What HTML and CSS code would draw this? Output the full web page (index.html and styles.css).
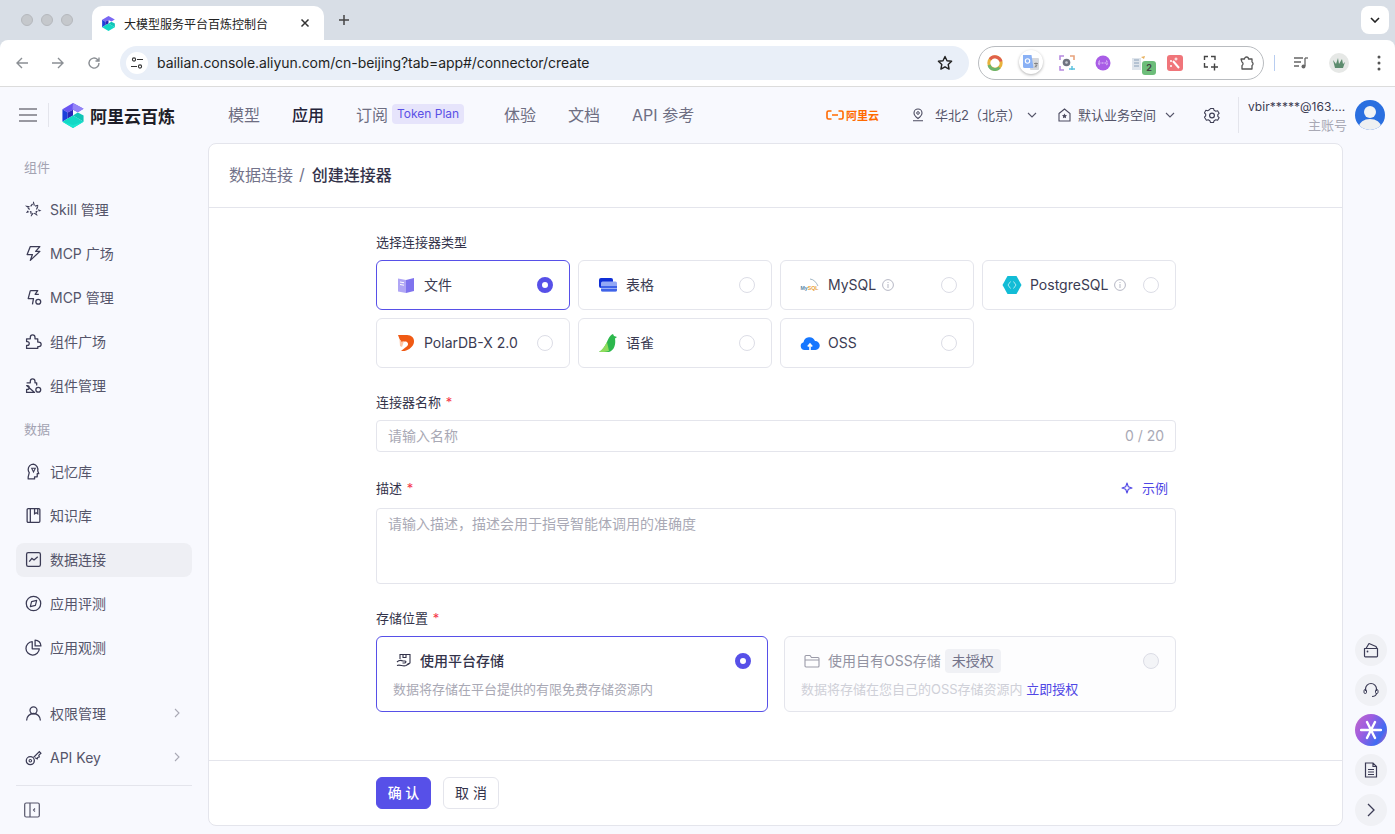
FILE: index.html
```html
<!DOCTYPE html>
<html lang="zh-CN">
<head>
    <meta charset="UTF-8">
    <meta name="viewport" content="width=device-width, initial-scale=1.0">
    <title>大模型服务平台百炼控制台</title>
    <link rel="stylesheet" href="styles.css">
</head>
<body>
<div class="window">

    <!-- browser tabs -->
    <div class="tabstrip">
        <div class="lights"><span></span><span></span><span></span></div>
        <div class="tab">
            <svg class="fav" width="13" height="15" viewBox="0 0 22 26"><path d="M11 0 22 6l-6 3.500L11 7 5.500 10 0 6.500z" fill="#7a68f4"/><path d="M0 6.500 5.500 10v6L0 19.500z" fill="#1c3fdb"/><path d="M5.500 10 11 7v6l-5.500 3z" fill="#2a25b8"/><path d="M5.500 16 11 13l11 6.500L11 26 0 19.500z" fill="#12d8c6"/><path d="M11 13l5-3 6 3v6.500z" fill="#0fc4b6"/></svg>
            <span class="tab-title">大模型服务平台百炼控制台</span>
            <svg class="tab-x" width="10" height="10" viewBox="0 0 10 10"><path d="M1.500 1.500l7 7M8.500 1.500l-7 7" stroke="#333" stroke-width="1.500"/></svg>
        </div>
        <svg class="tab-new" width="12" height="12" viewBox="0 0 12 12"><path d="M6 1v10M1 6h10" stroke="#444" stroke-width="1.500"/></svg>
        <div class="tab-menu"><svg width="10" height="6" viewBox="0 0 10 6"><path d="M1 1l4 4 4-4" fill="none" stroke="#222" stroke-width="1.600"/></svg></div>
    </div>

    <!-- browser toolbar -->
    <div class="toolbar">
        <div class="nav-btns">
            <svg width="16" height="16" viewBox="0 0 16 16"><path d="M14 8H3M8 3 3 8l5 5" fill="none" stroke="#8b8f94" stroke-width="1.400"/></svg>
            <svg width="16" height="16" viewBox="0 0 16 16"><path d="M2 8h11M8 3l5 5-5 5" fill="none" stroke="#8b8f94" stroke-width="1.400"/></svg>
            <svg width="16" height="16" viewBox="0 0 16 16"><path d="M13 8a5 5 0 1 1-1.500-3.500L13 6M13 2.500V6H9.500" fill="none" stroke="#8b8f94" stroke-width="1.400"/></svg>
        </div>
        <div class="urlbar">
            <div class="site-btn"><svg width="14" height="14" viewBox="0 0 14 14"><circle cx="4" cy="3.500" r="1.600" fill="none" stroke="#333" stroke-width="1.100"/><path d="M7 3.500h6M1 10.500h6" stroke="#333" stroke-width="1.100"/><circle cx="10" cy="10.500" r="1.600" fill="none" stroke="#333" stroke-width="1.100"/></svg></div>
            <span class="url">bailian.console.aliyun.com/cn-beijing?tab=app#/connector/create</span>
            <svg class="star" width="16" height="16" viewBox="0 0 16 16"><path d="M8 1.500l2 4.300 4.600.5-3.400 3.200.9 4.600L8 11.800l-4.100 2.300.9-4.600L1.400 6.300 6 5.800z" fill="none" stroke="#222" stroke-width="1.400" stroke-linejoin="round"/></svg>
        </div>
        <div class="ext-pill">
            <span class="ext"><svg width="16" height="16" viewBox="0 0 16 16"><circle cx="8" cy="8" r="6.200" fill="none" stroke="#e8b23c" stroke-width="3"/><path d="M3 4.300A6.200 6.200 0 0 1 14 6.500" fill="none" stroke="#e0604c" stroke-width="3"/><path d="M2 10a6.200 6.200 0 0 0 10.500 2.500" fill="none" stroke="#6cb56c" stroke-width="3"/></svg></span>
            <span class="ext ext-round"><svg width="18" height="18" viewBox="0 0 18 18"><rect x="8" y="4" width="9" height="12" rx="1" fill="#d6d8dc"/><path d="M1 1h8.500l2 13H2.500a1.500 1.500 0 0 1-1.500-1.500z" fill="#8ab1f5"/><circle cx="5.500" cy="7" r="2.200" fill="none" stroke="#fff" stroke-width="1.100"/><path d="M12 9.500h4M14 8.500v5M12.500 13l3-2" stroke="#777" stroke-width=".8"/></svg></span>
            <span class="ext"><svg width="16" height="16" viewBox="0 0 16 16"><path d="M1 5V1h4" fill="none" stroke="#b78ae0" stroke-width="1.600"/><path d="M11 1h4v4" fill="none" stroke="#e8a37c" stroke-width="1.600"/><path d="M1 11v4h4" fill="none" stroke="#b78ae0" stroke-width="1.600"/><circle cx="7.500" cy="7.500" r="3.800" fill="#6f7480"/><circle cx="7.500" cy="7.500" r="1.300" fill="#c9ccd2"/><path d="M10 14h6M13 11v4" stroke="#5cc2de" stroke-width="1.500"/></svg></span>
            <span class="ext"><svg width="16" height="16" viewBox="0 0 16 16"><circle cx="8" cy="8" r="7.500" fill="#a95de6"/><path d="M4.500 5.500 3.500 8l1 2.500M11.500 5.500l1 2.500-1 2.500M3.500 8h9" stroke="#ecdcfb" stroke-width=".9" fill="none" stroke-dasharray="2 1"/></svg></span>
            <span class="ext ext-badge"><svg width="16" height="16" viewBox="0 0 16 16"><path d="M1 3h9v12H1z" fill="#dfe5ec"/><path d="M3 5h5M3 8h5M3 11h5" stroke="#8aa0b8"/><path d="M10 2l4-1-1 3z" fill="#e7b15f"/></svg><b>2</b></span>
            <span class="ext"><svg width="16" height="16" viewBox="0 0 16 16"><rect width="16" height="16" rx="3" fill="#f0757a"/><path d="M6 6l6 7" stroke="#fff" stroke-width="2"/><path d="M9 2.500v3M7.500 4h3M4 5v2M3 6h2M4 10v2M3 11h2" stroke="#fff"/></svg></span>
            <span class="ext"><svg width="16" height="16" viewBox="0 0 16 16"><path d="M1.500 5V1.500H5M8 1.500h4V5M1.500 8v4H5" fill="none" stroke="#444" stroke-width="1.400"/><path d="M8 12h7M11.500 8.500v7" stroke="#444" stroke-width="1.400"/></svg></span>
            <span class="ext"><svg width="16" height="16" viewBox="0 0 16 16"><path d="M2 4h3.500a2 2 0 0 1 4 0H13v3a2 2 0 0 1 0 3.500V14H3v-3.500a2 2 0 0 0 0-3.500z" fill="none" stroke="#555" stroke-width="1.300" stroke-linejoin="round"/></svg></span>
        </div>
        <span class="tool-sep"></span>
        <div class="tool-end">
            <svg width="16" height="16" viewBox="0 0 16 16"><path d="M1 3h9M1 7h7M1 11h5" stroke="#666" stroke-width="1.300"/><path d="M12 3v8" stroke="#666" stroke-width="1.300"/><path d="M12 3h3" stroke="#666" stroke-width="1.300"/><circle cx="10.500" cy="11.500" r="2" fill="#666"/></svg>
            <span class="profile"><svg width="14" height="14" viewBox="0 0 14 14"><path d="M1 4l3 4 2-6 1 6 3-5 1 5 2-2-2 6H3z" fill="#5d8c6e"/></svg></span>
            <svg width="4" height="16" viewBox="0 0 4 16"><circle cx="2" cy="2" r="1.500" fill="#555"/><circle cx="2" cy="8" r="1.500" fill="#555"/><circle cx="2" cy="14" r="1.500" fill="#555"/></svg>
        </div>
    </div>

    <!-- console header -->
    <header class="topnav">
        <svg class="burger" width="18" height="14" viewBox="0 0 18 14"><path d="M0 1h18M0 7h18M0 13h18" stroke="#7a7a82" stroke-width="1.400"/></svg>
        <span class="top-sep"></span>
        <svg class="logo" width="22" height="25" viewBox="0 0 22 26"><path d="M11 0 22 6l-6 3.500L11 7 5.500 10 0 6.500z" fill="#6a55f2"/><path d="M11 0 22 6l-6 3.500-5.500-3z" fill="#9484f7"/><path d="M0 6.500 5.500 10v6L0 19.500z" fill="#1c3fdb"/><path d="M5.500 10 11 7v6l-5.500 3z" fill="#2a25b8"/><path d="M5.500 16 11 13l11 6.500L11 26 0 19.500z" fill="#12d8c6"/><path d="M11 13l5-3 6 3v6.500z" fill="#0fc4b6"/><path d="M0 19.500 11 26l11-6.500-11 3.500z" fill="#1be6d0"/></svg>
        <span class="brand">阿里云百炼</span>
        <nav class="mainnav">
            <a>模型</a>
            <a class="on">应用</a>
            <a class="with-badge">订阅<span class="plan">Token Plan</span></a>
            <a>体验</a>
            <a>文档</a>
            <a>API 参考</a>
        </nav>
        <div class="top-right">
            <span class="aliyun"><svg width="18" height="10" viewBox="0 0 18 10"><path d="M5.500 1H2.500Q1 1 1 2.500v5Q1 9 2.500 9h3M12.500 1h3Q17 1 17 2.500v5Q17 9 15.500 9h-3M6 5h6" fill="none" stroke="#ff6a00" stroke-width="1.600"/></svg>阿里云</span>
            <svg class="pin" width="14" height="14" viewBox="0 0 14 14"><path d="M7 1a4 4 0 0 1 4 4c0 2.500-4 5.500-4 5.500S3 7.500 3 5a4 4 0 0 1 4-4zM2 12.800h10" fill="none" stroke="#4b4b60" stroke-width="1.100"/><circle cx="7" cy="5" r="1.300" fill="none" stroke="#4b4b60"/></svg>
            <span class="region">华北2（北京）</span>
            <svg class="chev" width="10" height="6" viewBox="0 0 10 6"><path d="M1 1l4 4 4-4" fill="none" stroke="#55556a" stroke-width="1.100"/></svg>
            <svg class="home" width="13" height="14" viewBox="0 0 13 14"><path d="M1 5.500 6.500 1 12 5.500V13H1z" fill="none" stroke="#4b4b60" stroke-width="1.100"/><path d="M6.500 5.500l.8 1.600 1.700.2-1.200 1.200.3 1.700-1.600-.8-1.600.8.300-1.700L4 7.300l1.700-.2z" fill="#4b4b60"/></svg>
            <span class="space">默认业务空间</span>
            <svg class="chev chev-end" width="10" height="6" viewBox="0 0 10 6"><path d="M1 1l4 4 4-4" fill="none" stroke="#55556a" stroke-width="1.100"/></svg>
            <svg class="gear" width="16" height="17" viewBox="0 0 16 17"><path d="M6.500 1.500h3l.6 1.800 1.700.9 1.800-.5 1.500 2.600-1.300 1.400v1.600l1.300 1.400-1.500 2.600-1.800-.5-1.700.9-.6 1.800h-3l-.6-1.800-1.700-.9-1.800.5L.4 10.200l1.300-1.400V7.200L.4 5.800l1.500-2.600 1.800.5 1.700-.9z" fill="none" stroke="#3f3f55" stroke-width="1.100" stroke-linejoin="round"/><circle cx="8" cy="8.500" r="2.400" fill="none" stroke="#3f3f55" stroke-width="1.200"/></svg>
            <span class="user-sep"></span>
            <div class="user"><span class="mail">vbir*****@163....</span><span class="role">主账号</span></div>
            <svg class="avatar" width="30" height="30" viewBox="0 0 30 30"><defs><clipPath id="av"><circle cx="15" cy="15" r="15"/></clipPath></defs><circle cx="15" cy="15" r="15" fill="#2a6fe0"/><g clip-path="url(#av)"><circle cx="15" cy="12" r="6" fill="#f1f3f5"/><ellipse cx="15" cy="27" rx="11" ry="8" fill="#eef0f2"/></g></svg>
        </div>
    </header>

    <div class="layout">
        <!-- left menu -->
        <aside class="sidebar">
            <div class="side-label">组件</div>
            <a class="side-item"><svg class="ico" viewBox="0 0 16 16"><path d="M8 1.500l1 3.500 3.500-1-1.500 3.500 3 1.500-3.500 1 .5 3-3-2-2 2.500-.5-3.500-3.500.5 2-3L1.500 5l3.500.5z" fill="none" stroke="#3b3b55" stroke-width="1.100" stroke-dasharray="3 1.200"/></svg>Skill 管理</a>
            <a class="side-item"><svg class="ico" viewBox="0 0 16 16"><path d="M5 1.500h9L10 6h4l-9 8.500L7 9H2z" fill="none" stroke="#3b3b55" stroke-width="1.200" stroke-linejoin="round"/></svg>MCP 广场</a>
            <a class="side-item"><svg class="ico" viewBox="0 0 16 16"><path d="M5 1.500h7L9.500 5H13M7 14.500 8 9H3l2-7.500" fill="none" stroke="#3b3b55" stroke-width="1.200" stroke-linejoin="round"/><circle cx="12.500" cy="12" r="2.300" fill="none" stroke="#3b3b55" stroke-width="1.200"/></svg>MCP 管理</a>
            <a class="side-item"><svg class="ico" viewBox="0 0 16 16"><path d="M1.500 5.500H5V4a2.200 2.200 0 0 1 4.400 0v1.500H12v3h1a2.200 2.200 0 0 1 0 4.400h-1v1.600H1.500v-2.800h.7a1.800 1.800 0 0 0 0-3.600h-.7z" fill="none" stroke="#3b3b55" stroke-width="1.200" stroke-linejoin="round"/></svg>组件广场</a>
            <a class="side-item"><svg class="ico" viewBox="0 0 16 16"><path d="M1.500 5.500H5V4a2.200 2.200 0 0 1 4.400 0v1.500H11v2.500M9 14.500H1.500v-2.800h.7a1.800 1.800 0 0 0 0-3.600h-.7z" fill="none" stroke="#3b3b55" stroke-width="1.200" stroke-linejoin="round"/><circle cx="12.500" cy="12" r="2.300" fill="none" stroke="#3b3b55" stroke-width="1.200"/></svg>组件管理</a>
            <div class="side-label second">数据</div>
            <a class="side-item"><svg class="ico" viewBox="0 0 16 16"><path d="M3 13v2h6v-2h2.500v-3H13l-1-2.500A5.500 5.500 0 0 0 8 1a5 5 0 0 0-5 5c0 1 .3 2 1 3z" fill="none" stroke="#3b3b55" stroke-width="1.200" stroke-linejoin="round"/><path d="M6.300 5h3.400L8 8.500z" fill="none" stroke="#3b3b55"/></svg>记忆库</a>
            <a class="side-item"><svg class="ico" viewBox="0 0 16 16"><rect x="2" y="1.500" width="12" height="13" rx="1" fill="none" stroke="#3b3b55" stroke-width="1.200"/><path d="M5 1.500V14.500M9 1.500v5l1.500-1 1.500 1v-5" fill="none" stroke="#3b3b55" stroke-width="1.200"/></svg>知识库</a>
            <a class="side-item active"><svg class="ico" viewBox="0 0 16 16"><rect x="1.500" y="1.500" width="13" height="13" rx="1.500" fill="none" stroke="#3b3b55" stroke-width="1.200"/><path d="M4 10l2.500-3 2 1.500L12 5.500" fill="none" stroke="#3b3b55" stroke-width="1.200"/></svg>数据连接</a>
            <a class="side-item"><svg class="ico" viewBox="0 0 16 16"><circle cx="8" cy="8" r="6.800" fill="none" stroke="#3b3b55" stroke-width="1.200"/><path d="M11 5 9.800 9.800 5 11l1.200-4.800z" fill="none" stroke="#3b3b55" stroke-width="1.100" stroke-linejoin="round"/></svg>应用评测</a>
            <a class="side-item"><svg class="ico" viewBox="0 0 16 16"><path d="M6.800 2.500A6.300 6.300 0 1 0 13.500 9.200H6.800z" fill="none" stroke="#3b3b55" stroke-width="1.200" stroke-linejoin="round"/><path d="M9.500 1A5.500 5.500 0 0 1 15 6.500H9.500z" fill="none" stroke="#3b3b55" stroke-width="1.200" stroke-linejoin="round"/></svg>应用观测</a>
            <a class="side-item lower"><svg class="ico" viewBox="0 0 16 16"><circle cx="8" cy="5" r="3.300" fill="none" stroke="#3b3b55" stroke-width="1.200"/><path d="M1.500 14.500a6.500 6.500 0 0 1 13 0" fill="none" stroke="#3b3b55" stroke-width="1.200"/></svg>权限管理<svg class="side-arrow" width="6" height="10" viewBox="0 0 6 10"><path d="M1 1l4 4-4 4" fill="none" stroke="#a9a9b5" stroke-width="1.100"/></svg></a>
            <a class="side-item"><svg class="ico" viewBox="0 0 16 16"><circle cx="5" cy="11" r="3.800" fill="none" stroke="#3b3b55" stroke-width="1.200"/><circle cx="5" cy="11" r="1.200" fill="none" stroke="#3b3b55"/><path d="M8 8l5.500-5.500L15 4l-2 2 .5 1.500-1.500.5-.5 1.300-2-1" fill="none" stroke="#3b3b55" stroke-width="1.100"/></svg>API Key<svg class="side-arrow" width="6" height="10" viewBox="0 0 6 10"><path d="M1 1l4 4-4 4" fill="none" stroke="#a9a9b5" stroke-width="1.100"/></svg></a>
            <div class="side-foot">
                <svg width="16" height="16" viewBox="0 0 16 16"><rect x=".7" y="1" width="14.600" height="14" rx="1.500" fill="none" stroke="#55556a" stroke-width="1.200"/><path d="M6 1v14" stroke="#55556a" stroke-width="1.200"/><path d="M11 6.500 9.500 8l1.500 1.500" fill="none" stroke="#55556a" stroke-width="1.100"/></svg>
            </div>
        </aside>

        <!-- page card -->
        <main class="card">
            <div class="crumbs"><span class="crumb-back">数据连接</span><span class="crumb-slash">/</span><span class="crumb-now">创建连接器</span></div>
            <div class="form-scroll">
                <form class="form">
                    <div class="label">选择连接器类型</div>
                    <div class="types">
                        <div class="type selected">
                            <svg class="type-ico" viewBox="0 0 20 20"><path d="M2 3.500 10 5v13l-8-1.500z" fill="#b0a6f5"/><path d="M18 3 10 5v13l8-2z" fill="#7f73ee"/><path d="M4 7l4 .7M4 9.500l4 .7" stroke="#fff" stroke-width="1"/></svg>
                            <span class="type-name zh">文件</span><span class="radio on"></span>
                        </div>
                        <div class="type">
                            <svg class="type-ico" viewBox="0 0 20 20"><rect x="1" y="3" width="14" height="10" rx="2" fill="#0f2fd6"/><rect x="3" y="6.500" width="16" height="10" rx="1.500" fill="#93a8f5"/><path d="M3 11h16v4a1.500 1.500 0 0 1-1.500 1.500h-13A1.500 1.500 0 0 1 3 15z" fill="#3f63e8"/><path d="M3 13.500h16" stroke="#c3cffa" stroke-width=".7"/></svg>
                            <span class="type-name zh">表格</span><span class="radio"></span>
                        </div>
                        <div class="type">
                            <svg class="type-ico" viewBox="0 0 20 20"><path d="M10 4c4 .5 6 3 8 7" fill="none" stroke="#8aa4b8" stroke-width=".8"/><text x=".5" y="15" font-size="6" textLength="18" lengthAdjust="spacingAndGlyphs" font-family="Liberation Sans" font-weight="700" fill="#5b87a8">My<tspan fill="#e8a03c">SQL</tspan></text></svg>
                            <span class="type-name">MySQL</span><svg class="info" width="12" height="12" viewBox="0 0 12 12"><circle cx="6" cy="6" r="5.400" fill="none" stroke="#b5b7c4"/><path d="M6 5v4M6 3v1" stroke="#b5b7c4"/></svg><span class="radio"></span>
                        </div>
                        <div class="type">
                            <svg class="type-ico" viewBox="0 0 20 20"><path d="M5.500 1h9L19.500 10l-5 9h-9L.5 10z" fill="#12bcd6"/><path d="M8.500 6.500 6 10l2.500 3.500M11.500 6.500 14 10l-2.500 3.500" fill="none" stroke="#d2f4f8" stroke-width=".8"/></svg>
                            <span class="type-name">PostgreSQL</span><svg class="info" width="12" height="12" viewBox="0 0 12 12"><circle cx="6" cy="6" r="5.400" fill="none" stroke="#b5b7c4"/><path d="M6 5v4M6 3v1" stroke="#b5b7c4"/></svg><span class="radio"></span>
                        </div>
                        <div class="type">
                            <svg class="type-ico" viewBox="0 0 20 20"><path d="M2 2h9c4.500 0 7.500 3 7 7-.5 4.500-5 8-9.500 9H5l5-4c2.500-1 3-4.500 0-5.500-1-.3-3 0-4.500.5L3.500 6z" fill="#f05a14"/><path d="M3.500 6 5.500 9 8 8 6 14l-2-1z" fill="#ffc4a3"/></svg>
                            <span class="type-name">PolarDB-X 2.0</span><span class="radio"></span>
                        </div>
                        <div class="type">
                            <svg class="type-ico" viewBox="0 0 20 20"><path d="M1 19C5 17 7 13 9 9c1-3 3-7 6-8l1 2 3 1-2 1.500c1 6-1 12-6 13.500z" fill="#2db84d"/><path d="M1 19c3-2 5-5 8-10l2 9c-3 1-7 1-10 1z" fill="#8fdc5e"/></svg>
                            <span class="type-name zh">语雀</span><span class="radio"></span>
                        </div>
                        <div class="type">
                            <svg class="type-ico" viewBox="0 0 20 20"><path d="M4.500 17a4 4 0 0 1-1-7.800A6 6 0 0 1 15 8a4.500 4.500 0 0 1 .5 9z" fill="#1677ff"/><path d="M10 17v-5M7.800 13.500 10 11l2.200 2.500" fill="none" stroke="#fff" stroke-width="1.600"/></svg>
                            <span class="type-name">OSS</span><span class="radio"></span>
                        </div>
                    </div>

                    <div class="label">连接器名称 <i>*</i></div>
                    <div class="input"><span class="ph">请输入名称</span><span class="count">0 / 20</span></div>

                    <div class="label label-row"><span>描述 <i>*</i></span><a class="sample"><svg width="12" height="12" viewBox="0 0 12 12"><path d="M6 1l1.300 3.700L11 6 7.300 7.300 6 11 4.700 7.300 1 6l3.700-1.300z" fill="none" stroke="#4f46e5" stroke-width="1.100" stroke-linejoin="round"/></svg>示例</a></div>
                    <div class="textarea"><span class="ph">请输入描述，描述会用于指导智能体调用的准确度</span></div>

                    <div class="label">存储位置 <i>*</i></div>
                    <div class="stores">
                        <div class="store selected">
                            <div class="store-head">
                                <svg class="store-ico" viewBox="0 0 16 16"><path d="M4 6V1.500h10V10l-3 1.500M7 1.500v3h3v-3" fill="none" stroke="#33334a" stroke-width="1.100"/><path d="M1 9c2-2 4-2 6-1h2c1.500.3 1 2-.5 2H6.500M1 12.500c3-1.500 6 1.500 9 0l3.500-2" fill="none" stroke="#33334a" stroke-width="1.100"/></svg>
                                <span class="store-name">使用平台存储</span><span class="radio on"></span>
                            </div>
                            <p class="store-desc">数据将存储在平台提供的有限免费存储资源内</p>
                        </div>
                        <div class="store disabled">
                            <div class="store-head">
                                <svg class="store-ico" viewBox="0 0 16 16"><path d="M1 3.500a1 1 0 0 1 1-1h4l1.500 2H14a1 1 0 0 1 1 1V13a1 1 0 0 1-1 1H2a1 1 0 0 1-1-1zM1 7h14" fill="none" stroke="#9b9ba8" stroke-width="1.100"/></svg>
                                <span class="store-name">使用自有OSS存储</span><span class="tag">未授权</span><span class="radio"></span>
                            </div>
                            <p class="store-desc">数据将存储在您自己的OSS存储资源内 <a>立即授权</a></p>
                        </div>
                    </div>
                </form>
            </div>
            <div class="actions">
                <button class="btn primary" type="button">确 认</button>
                <button class="btn" type="button">取 消</button>
            </div>
        </main>

        <!-- right rail -->
        <aside class="rail">
            <span class="rail-btn"><svg width="16" height="16" viewBox="0 0 16 16"><path d="M1.500 6.500h13V14a.8.800 0 0 1-.8.800H2.300a.8.800 0 0 1-.8-.8zM3 6.500 6 1.500l7 3 1 2" fill="none" stroke="#3b3b55" stroke-width="1.200" stroke-linejoin="round"/><circle cx="4.500" cy="9.500" r=".9" fill="#3b3b55"/></svg></span>
            <span class="rail-btn"><svg width="16" height="16" viewBox="0 0 16 16"><path d="M2.500 9V7a5.500 5.500 0 0 1 11 0v2M13.500 11c0 2-2 3.500-4.500 3.500" fill="none" stroke="#3b3b55" stroke-width="1.200"/><rect x="1" y="7.500" width="2.500" height="4" rx="1.200" fill="none" stroke="#3b3b55"/><rect x="12.500" y="7.500" width="2.500" height="4" rx="1.200" fill="none" stroke="#3b3b55"/></svg></span>
            <span class="rail-btn ai"><svg width="22" height="22" viewBox="0 0 22 22"><path d="M1 11h20M7 3l8 16M15 3 7 19" stroke="#fff" stroke-width="2.400" stroke-linecap="round"/></svg></span>
            <span class="rail-btn"><svg width="16" height="16" viewBox="0 0 16 16"><path d="M2.500 1h7.500l3.500 3.500V15h-11zM10 1v3.500h3.500M5 7.500h6M5 10h6M5 12.500h6" fill="none" stroke="#3b3b55" stroke-width="1.200"/></svg></span>
            <span class="rail-btn"><svg width="8" height="14" viewBox="0 0 8 14"><path d="M1 1l6 6-6 6" fill="none" stroke="#3b3b55" stroke-width="1.300"/></svg></span>
        </aside>
    </div>
</div>
</body>
</html>
```

FILE: styles.css
```css
*{
    box-sizing: border-box;
}
html,body{
    margin: 0;
    height: 100%;
    overflow: hidden;
}
body{
    font-family: Inter, "Noto Sans CJK SC", sans-serif;
    font-size: 14px;
    color: #3b3b52;
    background-color: #d8dee6;
}
svg{
    display: block;
    flex: none;
}
a{
    color: inherit;
    cursor: pointer;
}
.window{
    width: 1395px;
    height: 834px;
    display: flex;
    flex-direction: column;
}

/* browser tabs */
.tabstrip{
    height: 40px;
    display: flex;
    align-items: flex-end;
    padding-left: 21px;
    background-color: #d8dee6;
}
.lights{
    display: flex;
    gap: 8px;
    align-self: center;
    width: 71px;
}
.lights span{
    width: 12px;
    height: 12px;
    border-radius: 50%;
    background-color: #c5c8cc;
    border: 1px solid #b5b8bd;
}
.tab{
    width: 232px;
    height: 34px;
    display: flex;
    align-items: center;
    padding-left: 10px;
    background-color: #fff;
    border-radius: 10px 10px 0 0;
}
.tab-title{
    margin-left: 9px;
    font-size: 12px;
    color: #222;
    white-space: nowrap;
    width: 176px;
}
.tab-new{
    align-self: center;
    margin-left: 14px;
}
.tab-menu{
    width: 28px;
    height: 28px;
    margin-left: auto;
    margin-right: 6px;
    margin-bottom: 6px;
    border-radius: 8px;
    background-color: #fff;
    display: flex;
    align-items: center;
    justify-content: center;
}

/* browser toolbar */
.toolbar{
    height: 47px;
    display: flex;
    align-items: center;
    background-color: #fff;
    border-bottom: 1px solid #dcdcdc;
    border-radius: 8px 8px 0 0;
    padding-bottom: 1px;
}
.nav-btns{
    display: flex;
    gap: 20px;
    margin-left: 14px;
}
.urlbar{
    width: 849px;
    height: 34px;
    margin-left: 18px;
    display: flex;
    align-items: center;
    border-radius: 17px;
    background-color: #e9eff8;
    padding-left: 6px;
}
.site-btn{
    width: 22px;
    height: 22px;
    border-radius: 50%;
    background-color: #fff;
    display: flex;
    align-items: center;
    justify-content: center;
}
.url{
    margin-left: 9px;
    font-size: 14px;
    letter-spacing: -0.06px;
    color: #1f1f1f;
    white-space: nowrap;
}
.star{
    margin-left: auto;
    margin-right: 16px;
}
.ext-pill{
    width: 286px;
    height: 34px;
    margin-left: 9px;
    border: 1px solid #b9bcc0;
    border-radius: 17px;
    display: flex;
    align-items: center;
    padding-left: 8px;
}
.ext{
    width: 16px;
    margin-right: 20px;
    display: flex;
    align-items: center;
    justify-content: center;
    position: relative;
}
.ext-round::before{
    content: "";
    position: absolute;
    left: -4px;
    top: -4px;
    width: 24px;
    height: 24px;
    border-radius: 50%;
    background-color: #fff;
    box-shadow: 0 1px 3px rgba(0,0,0,.3);
}
.ext-round svg{
    position: relative;
}
.ext-badge b{
    position: absolute;
    right: -9px;
    top: 6px;
    width: 14px;
    height: 14px;
    border-radius: 3px;
    background-color: #6dbd7a;
    color: #444;
    font-size: 9px;
    line-height: 14px;
    text-align: center;
}
.tool-sep{
    width: 1px;
    height: 16px;
    margin-left: 10px;
    background-color: #b8cdf0;
}
.tool-end{
    display: flex;
    align-items: center;
    margin-left: 18px;
    gap: 16px;
}
.tool-end > svg:last-child{
    margin-left: 12px;
}
.profile{
    width: 20px;
    height: 20px;
    border-radius: 50%;
    background-color: #e6e8e6;
    display: flex;
    align-items: center;
    justify-content: center;
    margin-left: 4px;
}

/* console header */
.topnav{
    height: 56px;
    display: flex;
    align-items: center;
    background-color: #f8f9fe;
    padding-left: 19px;
}
.top-sep{
    width: 1px;
    height: 24px;
    margin: 0 13px 0 11px;
    background-color: #e4e5ec;
}
.brand{
    margin-left: 6px;
    font-size: 17px;
    font-weight: 700;
    color: #1e1e28;
    width: 84px;
    white-space: nowrap;
}
.mainnav{
    display: flex;
    align-items: center;
    gap: 32px;
    margin-left: 54px;
    padding-bottom: 2px;
    font-size: 16px;
    color: #6e6e82;
}
.mainnav .on{
    color: #24243a;
    font-weight: 500;
}
.with-badge{
    display: flex;
    align-items: center;
    gap: 4px;
    margin-right: 8px;
}
.plan{
    width: 72px;
    height: 20px;
    border-radius: 4px;
    line-height: 20px;
    text-align: center;
    white-space: nowrap;
    font-size: 12px;
    color: #5a50e6;
    background-color: #e6e4fb;
}
.top-right{
    display: flex;
    align-items: center;
    margin-left: auto;
    font-size: 13px;
    color: #55556a;
    height: 100%;
}
.aliyun{
    display: flex;
    align-items: center;
    gap: 2px;
    font-size: 11px;
    font-weight: 700;
    color: #ff6a00;
    margin-right: 32px;
}
.region{
    margin-left: 10px;
    padding-bottom: 2px;
    white-space: nowrap;
}
.chev{
    margin-left: 6px;
}
.home{
    margin-left: 21px;
}
.space{
    margin-left: 7px;
    padding-bottom: 2px;
    white-space: nowrap;
}
.chev-end{
    margin-left: 9px;
}
.gear{
    margin-left: 29px;
}
.user-sep{
    width: 1px;
    height: 36px;
    margin: 0 9px 0 18px;
    background-color: #e4e5ec;
}
.user{
    display: flex;
    flex-direction: column;
    line-height: 19px;
    width: 99px;
    padding-top: 2px;
    white-space: nowrap;
}
.mail{
    color: #3b3b52;
    font-size: 12px;
    letter-spacing: .05px;
}
.role{
    align-self: flex-end;
    color: #a9a9b5;
}
.avatar{
    margin: 0 10px 0 8px;
}

/* layout */
.layout{
    flex: 1;
    display: flex;
    min-height: 0;
    background-color: #f8f9fe;
}

/* left menu */
.sidebar{
    width: 208px;
    padding: 0 16px;
    display: flex;
    flex-direction: column;
    gap: 10px;
}
.side-label{
    height: 24px;
    margin: 12px 0 4px 8px;
    line-height: 24px;
    font-size: 13px;
    color: #a3a3b2;
}
.side-label.second{
    margin-top: 4px;
}
.side-item{
    height: 34px;
    flex: none;
    display: flex;
    align-items: center;
    gap: 8px;
    padding-left: 9px;
    padding-bottom: 2px;
    border-radius: 8px;
    color: #55556a;
}
.ico{
    width: 17px;
    height: 17px;
}
.active{
    background-color: #eeeff4;
}
.lower{
    margin-top: 22px;
}
.side-arrow{
    margin-left: auto;
    margin-right: 12px;
}
.side-foot{
    padding-top: 16px;
    padding-left: 8px;
    border-top: 1px solid #e4e5ec;
}

/* page card */
.card{
    width: 1135px;
    height: 683px;
    display: flex;
    flex-direction: column;
    background-color: #fff;
    border: 1px solid #e4e5ec;
    border-radius: 8px;
}
.crumbs{
    height: 64px;
    flex: none;
    display: flex;
    align-items: center;
    gap: 6px;
    padding-left: 20px;
    padding-bottom: 3px;
    border-bottom: 1px solid #e4e5ec;
    font-size: 16px;
}
.crumb-back,.crumb-slash{
    color: #73738a;
}
.crumb-now{
    margin-left: 1px;
    font-weight: 500;
    color: #33334a;
}
.form-scroll{
    flex: 1;
    min-height: 0;
}
.form{
    width: 800px;
    margin-left: 167px;
    padding-top: 24px;
}
.label{
    height: 20px;
    margin-bottom: 8px;
    line-height: 20px;
    font-size: 13px;
    color: #33334a;
}
.label i{
    font-style: normal;
    color: #f5384a;
    margin-left: 1px;
}
.label-row{
    display: flex;
    justify-content: space-between;
    margin-bottom: 10px;
}
.sample{
    display: flex;
    align-items: center;
    gap: 9px;
    margin-right: 8px;
    color: #4f46e5;
}
.types{
    display: grid;
    grid-template-columns: repeat(4, 194px);
    gap: 8px;
    margin-bottom: 24px;
}
.type{
    height: 50px;
    display: flex;
    align-items: center;
    padding: 0 16px 0 19px;
    border: 1px solid #e4e5ec;
    border-radius: 6px;
}
.type.selected,.store.selected{
    border-color: #5750e8;
}
.type-ico{
    width: 20px;
    height: 20px;
    margin-right: 8px;
}
.type-name{
    padding-bottom: 1px;
    color: #3b3b52;
}
.type-name.zh{
    padding-bottom: 3px;
}
.info{
    margin-left: 6px;
}
.radio{
    width: 16px;
    height: 16px;
    flex: none;
    margin-left: auto;
    border-radius: 50%;
    border: 1px solid #dcdde6;
    background-color: #fff;
}
.radio.on{
    border: 5px solid #5750e8;
}
.input{
    height: 32px;
    display: flex;
    align-items: center;
    justify-content: space-between;
    padding: 0 11px 2px;
    margin-bottom: 26px;
    border: 1px solid #e4e5ec;
    border-radius: 4px;
}
.ph,.count{
    color: #a9a9b5;
}
.textarea{
    height: 76px;
    padding: 4px 11px;
    margin-bottom: 24px;
    border: 1px solid #e4e5ec;
    border-radius: 4px;
}
.stores{
    display: grid;
    grid-template-columns: 392px 392px;
    gap: 16px;
}
.store{
    height: 76px;
    padding: 16px 16px 0;
    border: 1px solid #e4e5ec;
    border-radius: 6px;
}
.store-head{
    height: 16px;
    display: flex;
    align-items: center;
}
.store-ico{
    width: 16px;
    height: 16px;
    margin-left: 3px;
    margin-right: 8px;
}
.store-name{
    margin-top: -2px;
    font-weight: 500;
    color: #33334a;
}
.store-desc{
    margin: 11px 0 0;
    font-size: 13px;
    line-height: 18px;
    color: #a9a9b5;
}
.store.disabled{
    background-color: #fdfdfe;
}
.disabled .store-name{
    font-weight: 400;
    color: #9393a2;
}
.disabled .store-desc{
    color: #cfd0d8;
}
.disabled .store-desc a{
    color: #4f46e5;
}
.disabled .radio{
    background-color: #f3f4f7;
}
.tag{
    margin-left: 4px;
    height: 24px;
    padding: 0 7px;
    line-height: 23px;
    border-radius: 4px;
    color: #73738a;
    background-color: #f0f1f5;
}
.actions{
    height: 65px;
    flex: none;
    display: flex;
    align-items: center;
    gap: 12px;
    padding-left: 167px;
    border-top: 1px solid #e4e5ec;
}
.btn{
    height: 32px;
    width: 56px;
    padding: 0 0 2px;
    font-family: inherit;
    font-size: 14px;
    color: #33334a;
    border-radius: 6px;
    border: 1px solid #e4e5ec;
    background-color: #fff;
}
.primary{
    width: 55px;
    color: #fff;
    font-weight: 500;
    border-color: #5750e8;
    background-color: #5750e8;
}

/* right rail */
.rail{
    width: 52px;
    padding: 0 0 8px 12px;
    display: flex;
    flex-direction: column;
    justify-content: flex-end;
    gap: 8px;
}
.rail-btn{
    width: 32px;
    height: 32px;
    border-radius: 50%;
    display: flex;
    align-items: center;
    justify-content: center;
    background-color: #f0f1f5;
}
.ai{
    background: linear-gradient(120deg, #c06ac8 0%, #a05ce0 35%, #3f6bf2 75%, #c45ab8 100%);
}
```
